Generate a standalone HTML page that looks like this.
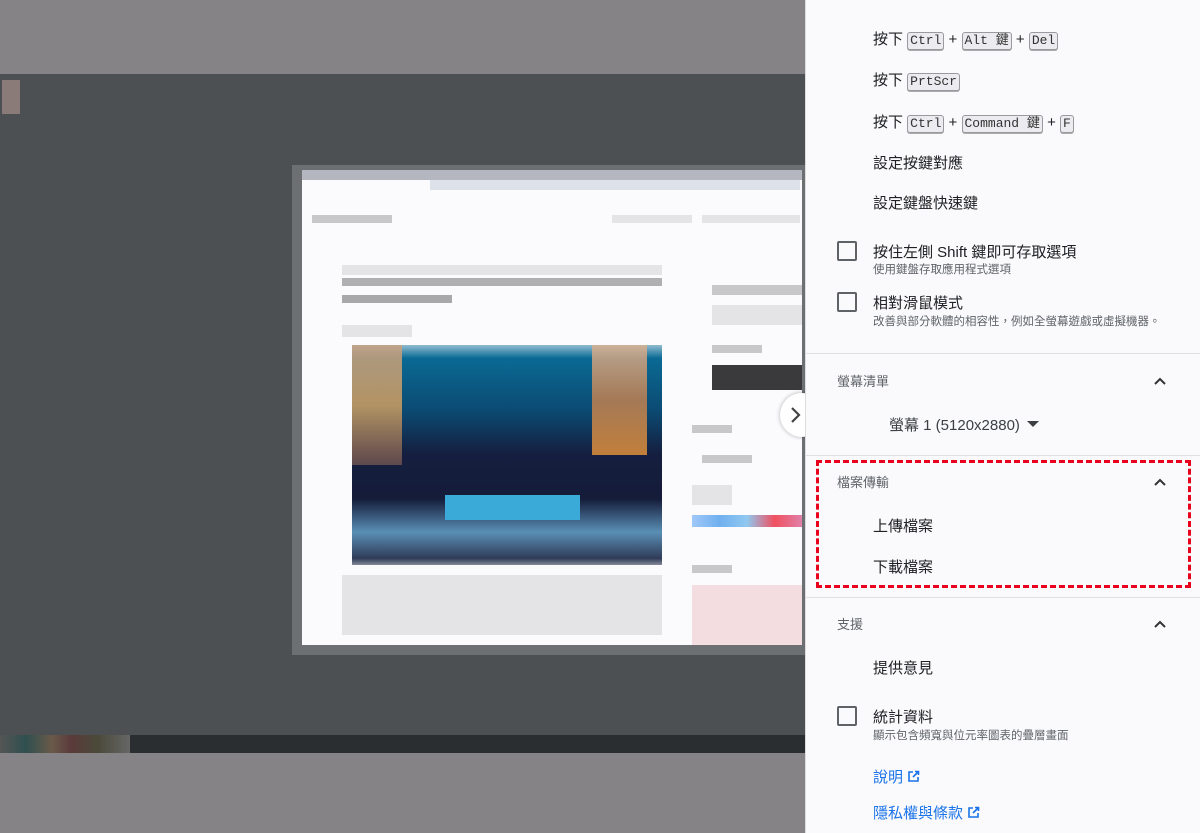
<!DOCTYPE html>
<html><head><meta charset="utf-8"><style>
*{margin:0;padding:0;box-sizing:border-box}
body{width:1200px;height:833px;overflow:hidden;position:relative;background:#858386;font-family:"Liberation Sans","Noto Sans CJK TC",sans-serif}
.a{position:absolute}
.k{font-family:"Liberation Mono",monospace;font-size:13px;border:1px solid #9a9a9e;border-radius:3px;background:#ececf0;padding:0 2px;color:#333;line-height:16px;display:inline-block;box-shadow:0 1px 0 #aaa}
.row{position:absolute;left:873px;font-size:15px;color:#202124;white-space:nowrap}
.sub{font-size:11px;color:#5f6368}
.cb{position:absolute;left:837px;width:20px;height:20px;border:2px solid #5f6368;border-radius:2px}
.hd{position:absolute;left:837px;font-size:13px;color:#5f6368}
.car{position:absolute;left:1153px;width:14px;height:10px}
.g{position:absolute;background:#c8c8ca}
.lg{position:absolute;background:#e4e4e6}
</style></head><body>
<div class="a" style="left:0;top:74px;width:805px;height:661px;background:#4c5053"></div>
<div class="a" style="left:0;top:735px;width:805px;height:18px;background:#2a2e31"></div>
<div class="a" style="left:0;top:735px;width:130px;height:18px;background:linear-gradient(90deg,#555 0,#2f4f4f 20%,#6a5a4a 40%,#5a3a3a 55%,#4a4a3a 75%,#666 100%)"></div>
<div class="a" style="left:2px;top:80px;width:18px;height:34px;background:#8a7a78"></div>
<div class="a" style="left:292px;top:165px;width:513px;height:490px;background:#6d7073"></div>
<div class="a" style="left:302px;top:170px;width:500px;height:475px;background:#fbfbfd"></div>
<div class="a" style="left:302px;top:170px;width:500px;height:10px;background:#b4b7c0"></div>
<div class="a" style="left:430px;top:180px;width:370px;height:10px;background:#dde2ea"></div>
<div class="g" style="left:312px;top:215px;width:80px;height:8px"></div>
<div class="lg" style="left:612px;top:215px;width:80px;height:8px"></div>
<div class="lg" style="left:702px;top:215px;width:98px;height:8px"></div>
<div class="lg" style="left:342px;top:265px;width:320px;height:10px"></div>
<div class="g" style="left:342px;top:278px;width:320px;height:8px;background:#b0b0b2"></div>
<div class="g" style="left:342px;top:295px;width:110px;height:8px;background:#a8a8aa"></div>
<div class="lg" style="left:342px;top:325px;width:70px;height:12px"></div>
<div class="a" style="left:352px;top:345px;width:310px;height:220px;background:linear-gradient(180deg,#8fbcd0 0,#0a6a94 6%,#0b4a72 30%,#151e3e 50%,#151c3a 70%,#5a8fb5 85%,#2f3b58 97%,#858a9a 100%)"></div>
<div class="a" style="left:352px;top:345px;width:50px;height:120px;background:linear-gradient(180deg,#c8a080,#d0a060,#6a5050);opacity:.85"></div>
<div class="a" style="left:592px;top:345px;width:55px;height:110px;background:linear-gradient(180deg,#d8b090,#c08050,#e0903a);opacity:.85"></div>
<div class="a" style="left:445px;top:495px;width:135px;height:25px;background:#3aaad8"></div>
<div class="lg" style="left:342px;top:575px;width:320px;height:60px"></div>
<div class="g" style="left:712px;top:285px;width:90px;height:10px"></div>
<div class="lg" style="left:712px;top:305px;width:90px;height:20px"></div>
<div class="g" style="left:712px;top:345px;width:50px;height:8px"></div>
<div class="a" style="left:712px;top:365px;width:90px;height:25px;background:#3a3a3c"></div>
<div class="g" style="left:692px;top:425px;width:40px;height:8px"></div>
<div class="g" style="left:702px;top:455px;width:50px;height:8px"></div>
<div class="lg" style="left:692px;top:485px;width:40px;height:20px"></div>
<div class="a" style="left:692px;top:515px;width:110px;height:12px;background:linear-gradient(90deg,#a0c8f8,#70b0f0,#90c8f0,#f05060,#e080a8)"></div>
<div class="g" style="left:692px;top:565px;width:40px;height:8px"></div>
<div class="a" style="left:692px;top:585px;width:110px;height:60px;background:#f3dde0"></div>
<div class="a" style="left:780px;top:393px;width:44px;height:44px;border-radius:50%;background:#fff;box-shadow:0 0 4px rgba(0,0,0,.3)"></div>
<svg class="a" style="left:789px;top:405px" width="14" height="20"><path d="M3 3l7 7-7 7" fill="none" stroke="#444" stroke-width="2.2"/></svg>
<div class="a" style="left:805px;top:0;width:395px;height:833px;background:#fafafc;border-left:1px solid #ddd"></div>
<div class="row" style="top:28px">按下 <span class="k">Ctrl</span> + <span class="k">Alt 鍵</span> + <span class="k">Del</span></div>
<div class="row" style="top:69px">按下 <span class="k">PrtScr</span></div>
<div class="row" style="top:111px">按下 <span class="k">Ctrl</span> + <span class="k">Command 鍵</span> + <span class="k">F</span></div>
<div class="row" style="top:152px">設定按鍵對應</div>
<div class="row" style="top:192px">設定鍵盤快速鍵</div>
<div class="cb" style="top:241px"></div>
<div class="row" style="top:241px">按住左側 Shift 鍵即可存取選項</div>
<div class="row sub" style="top:261px;font-size:11.5px">使用鍵盤存取應用程式選項</div>
<div class="cb" style="top:292px"></div>
<div class="row" style="top:292px">相對滑鼠模式</div>
<div class="row sub" style="top:313px;font-size:11.5px">改善與部分軟體的相容性，例如全螢幕遊戲或虛擬機器。</div>
<div class="a" style="left:805px;top:353px;width:395px;height:1px;background:#e0e0e2"></div>
<div class="hd" style="top:371px">螢幕清單</div>
<svg class="car" style="top:376px"><path d="M2 8l5-5 5 5" fill="none" stroke="#333" stroke-width="2"/></svg>
<div class="row" style="left:889px;top:414px;color:#3c4043">螢幕 1 (5120x2880) <svg width="12" height="8" style="vertical-align:2px;margin-left:3px"><path d="M0 1h12L6 7z" fill="#3c4043"/></svg></div>
<div class="a" style="left:805px;top:455px;width:395px;height:1px;background:#e0e0e2"></div>
<div class="a" style="left:816px;top:460px;width:375px;height:128px;border:3px dashed #e8001c"></div>
<div class="hd" style="top:472px">檔案傳輸</div>
<svg class="car" style="top:477px"><path d="M2 8l5-5 5 5" fill="none" stroke="#333" stroke-width="2"/></svg>
<div class="row" style="top:515px">上傳檔案</div>
<div class="row" style="top:556px">下載檔案</div>
<div class="a" style="left:805px;top:597px;width:395px;height:1px;background:#e0e0e2"></div>
<div class="hd" style="top:614px">支援</div>
<svg class="car" style="top:619px"><path d="M2 8l5-5 5 5" fill="none" stroke="#333" stroke-width="2"/></svg>
<div class="row" style="top:657px">提供意見</div>
<div class="cb" style="top:706px"></div>
<div class="row" style="top:706px">統計資料</div>
<div class="row sub" style="top:727px;font-size:11.5px">顯示包含頻寬與位元率圖表的疊層畫面</div>
<div class="row" style="top:766px;color:#1a73e8">說明 <svg width="13" height="13" style="vertical-align:-1px"><path d="M6 2H2v9h9V7M8 1.5h3.5V5M11.5 1.5L6 7" fill="none" stroke="#1a73e8" stroke-width="1.6"/></svg></div>
<div class="row" style="top:802px;color:#1a73e8">隱私權與條款 <svg width="13" height="13" style="vertical-align:-1px"><path d="M6 2H2v9h9V7M8 1.5h3.5V5M11.5 1.5L6 7" fill="none" stroke="#1a73e8" stroke-width="1.6"/></svg></div>
</body></html>
